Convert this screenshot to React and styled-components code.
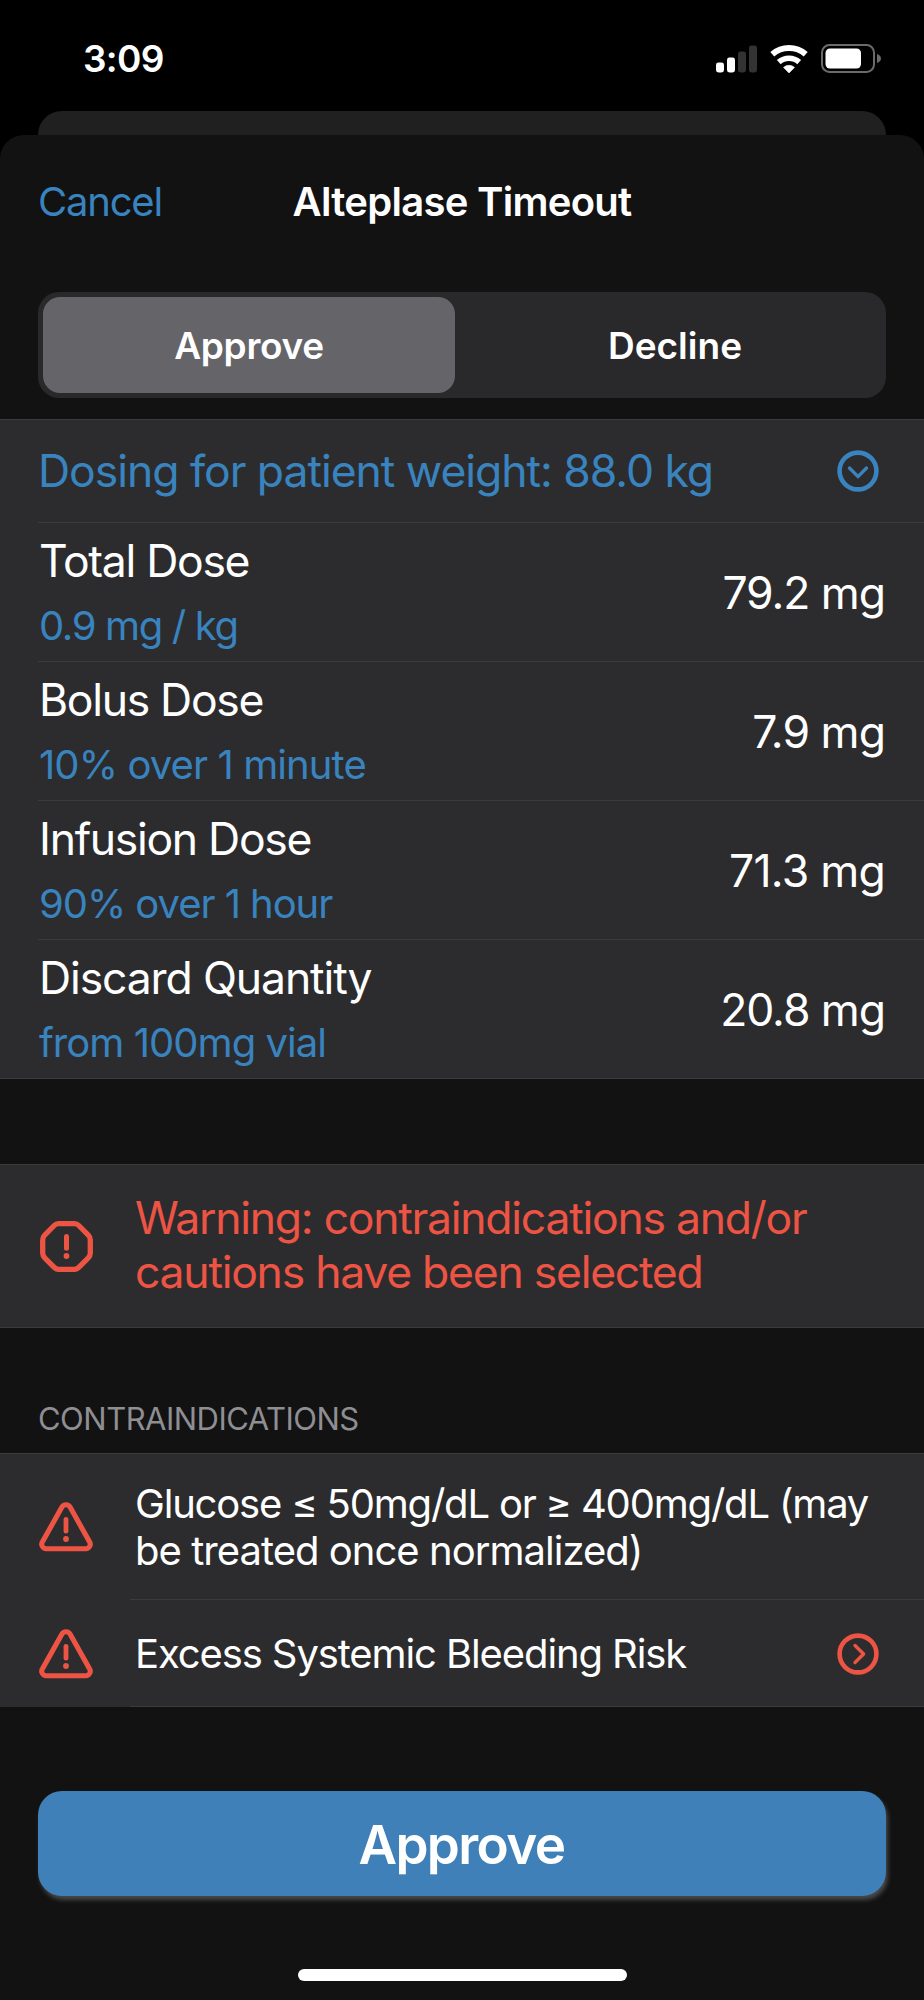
import React from 'react'
import styled, {createGlobalStyle} from 'styled-components'

const blue = '#3983bf'
const red = '#ee5444'
const line = '#3b3b3d'

const doses = [
  {title: 'Total Dose', note: '0.9 mg / kg', value: '79.2 mg', tracking: [-1.3, -1.36, -1.05]},
  {title: 'Bolus Dose', note: '10% over 1 minute', value: '7.9 mg', tracking: [-1.3, -0.9, -0.95]},
  {title: 'Infusion Dose', note: '90% over 1 hour', value: '71.3 mg', tracking: [-1.3, -1.05, -0.75]},
  {title: 'Discard Quantity', note: 'from 100mg vial', value: '20.8 mg', tracking: [-1.13, -0.95, -1.05]}
]

function SignalIcon() {
  return (
    <svg width="41" height="28" viewBox="0 0 41 28">
      <rect x="0" y="17.5" width="8" height="10" rx="2.4" fill="#fff" />
      <rect x="11" y="12.5" width="8" height="15" rx="2.4" fill="#fff" />
      <rect x="22" y="6.5" width="8" height="21" rx="2.4" fill="#333" />
      <rect x="33" y="0.5" width="8" height="27" rx="2.4" fill="#333" />
    </svg>
  )
}

function WifiIcon() {
  return (
    <svg width="38" height="30" viewBox="0 0 38 30" fill="none" stroke="#fff">
      <path d="M2.3 10.3A25.5 25.5 0 0 1 35.7 10.3" strokeWidth="6" />
      <path d="M8.8 18.1A15.3 15.3 0 0 1 29.2 18.1" strokeWidth="5.6" />
      <path d="M19 29L13.5 23.4A8.3 8.3 0 0 1 24.5 23.4Z" fill="#fff" strokeWidth="0.6" strokeLinejoin="round" />
    </svg>
  )
}

function BatteryIcon() {
  return (
    <svg width="60" height="29" viewBox="0 0 60 29">
      <rect x="1" y="1" width="52" height="27" rx="7.5" fill="none" stroke="#6b6b6b" strokeWidth="2" />
      <rect x="4.5" y="4.5" width="35.5" height="20" rx="4.5" fill="#fff" />
      <path d="M56 10C58.4 10.6 60 12.3 60 14.5S58.4 18.4 56 19Z" fill="#6b6b6b" />
    </svg>
  )
}

function ChevronCircle({color, right}) {
  return (
    <svg width="42" height="42" viewBox="0 0 42 42" fill="none" stroke={color}>
      <circle cx="21" cy="21" r="18.4" strokeWidth="4.6" />
      <path
        d="M12.5 18L21 26.6L29.5 18"
        strokeWidth="3.4"
        strokeLinecap="round"
        strokeLinejoin="round"
        transform={right ? 'rotate(-90 21 21)' : undefined}
      />
    </svg>
  )
}

function OctagonAlert() {
  return (
    <svg width="53" height="51" viewBox="0 0 53 51" fill="none" stroke={red}>
      <path
        d="M18.5 2.7H34.5Q37 2.7 38.8 4.5L48.3 14.2Q50.3 16.2 50.3 18.9V32.1Q50.3 34.8 48.3 36.8L38.8 46.4Q37 48.3 34.5 48.3H18.5Q16 48.3 14.2 46.4L4.7 36.8Q2.7 34.8 2.7 32.1V18.9Q2.7 16.2 4.7 14.2L14.2 4.5Q16 2.7 18.5 2.7Z"
        strokeWidth="5.3"
      />
      <path d="M26.5 15.6V27.2" strokeWidth="5" strokeLinecap="round" />
      <circle cx="26.5" cy="35" r="2.9" fill={red} stroke="none" />
    </svg>
  )
}

function TriangleAlert() {
  return (
    <svg width="54" height="50" viewBox="0 0 54 50" fill="none" stroke={red}>
      <path
        d="M22.8 5.3A4.8 4.8 0 0 1 31.2 5.3L50.4 39.6A4.5 4.5 0 0 1 46.5 46.7H7.5A4.5 4.5 0 0 1 3.6 39.6Z"
        strokeWidth="5.1"
      />
      <path d="M27 17.3V29.2" strokeWidth="4.8" strokeLinecap="round" />
      <circle cx="27" cy="37" r="2.9" fill={red} stroke="none" />
    </svg>
  )
}

export default function App() {
  return (
    <>
      <GlobalStyle />
      <Screen>
        <StatusBar>
          <Time>3:09</Time>
          <StatusIcons>
            <SignalIcon />
            <WifiIcon />
            <BatteryIcon />
          </StatusIcons>
        </StatusBar>
        <BackCard />
        <Sheet>
          <NavBar>
            <Cancel>Cancel</Cancel>
            <NavTitle>Alteplase Timeout</NavTitle>
          </NavBar>
          <Segmented>
            <Segment $active $tracking={-0.31}>
              Approve
            </Segment>
            <Segment $tracking={0}>Decline</Segment>
          </Segmented>

          <Panel>
            <PanelHeader>
              Dosing for patient weight: 88.0 kg
              <ChevronCircle color={blue} />
            </PanelHeader>
            {doses.map(dose => (
              <DoseRow key={dose.title}>
                <div>
                  <DoseTitle $tracking={dose.tracking[0]}>{dose.title}</DoseTitle>
                  <DoseNote $tracking={dose.tracking[1]}>{dose.note}</DoseNote>
                </div>
                <DoseValue $tracking={dose.tracking[2]}>{dose.value}</DoseValue>
              </DoseRow>
            ))}
          </Panel>

          <Warning>
            <OctagonAlert />
            <WarningText>
              Warning: contraindications and/or
              <br />
              cautions have been selected
            </WarningText>
          </Warning>

          <SectionTitle>CONTRAINDICATIONS</SectionTitle>
          <AlertList>
            <AlertRow>
              <TriangleAlert />
              <AlertText $height={145}>
                <div>
                  <AlertLine $tracking={-1.19}>Glucose ≤ 50mg/dL or ≥ 400mg/dL (may</AlertLine>
                  <AlertLine $tracking={-0.97}>be treated once normalized)</AlertLine>
                </div>
              </AlertText>
            </AlertRow>
            <AlertRow>
              <TriangleAlert />
              <AlertText $height={106}>
                <AlertLine $tracking={-1.11}>Excess Systemic Bleeding Risk</AlertLine>
                <ChevronCircle color={red} right />
              </AlertText>
            </AlertRow>
          </AlertList>

          <ApproveButton>Approve</ApproveButton>
          <HomeIndicator />
        </Sheet>
      </Screen>
    </>
  )
}

const GlobalStyle = createGlobalStyle`
  * {
    box-sizing: border-box;
  }

  body {
    margin: 0;
    background: #000;
    font-family: 'Inter', 'Liberation Sans', sans-serif;
  }

  svg {
    display: block;
    flex: none;
  }
`

const Screen = styled.div`
  display: flex;
  flex-direction: column;
  width: 924px;
  height: 2000px;
  overflow: hidden;
  background: #000;
  color: #fff;
  white-space: nowrap;
`

// Status bar

const StatusBar = styled.div`
  display: flex;
  align-items: center;
  justify-content: space-between;
  height: 111px;
  padding: 6px 43px 0 83px;
`

const Time = styled.div`
  font-size: 37px;
  font-weight: 600;
  letter-spacing: -0.7px;
`

const StatusIcons = styled.div`
  display: flex;
  align-items: center;
  gap: 13px;
`

// Sheet

const BackCard = styled.div`
  height: 24px;
  margin: 0 38px;
  border-radius: 24px 24px 0 0;
  background: #202020;
`

const Sheet = styled.div`
  flex: 1;
  display: flex;
  flex-direction: column;
  border-radius: 24px 24px 0 0;
  background: #121212;
`

const NavBar = styled.div`
  display: grid;
  grid-template-columns: 1fr auto 1fr;
  align-items: center;
  height: 133px;
  padding: 0 38px;
  font-size: 40px;
`

const Cancel = styled.div`
  color: ${blue};
  letter-spacing: -1.2px;
`

const NavTitle = styled.div`
  font-weight: 600;
  letter-spacing: -0.72px;
`

const Segmented = styled.div`
  display: grid;
  grid-template-columns: 1fr 1fr;
  gap: 14px;
  height: 106px;
  margin: 24px 38px 21px;
  padding: 5px;
  border-radius: 21px;
  background: #29292b;
`

const Segment = styled.div`
  display: flex;
  align-items: center;
  justify-content: center;
  border-radius: 17px;
  background: ${props => (props.$active ? '#656468' : 'transparent')};
  font-size: 37px;
  font-weight: 600;
  letter-spacing: ${props => props.$tracking}px;
`

// Dosing

const Panel = styled.div`
  border: solid ${line};
  border-width: 1px 0;
  background: #2c2c2e;
`

const PanelHeader = styled.div`
  display: flex;
  align-items: center;
  justify-content: space-between;
  height: 103px;
  margin-left: 38px;
  padding-right: 45px;
  border-bottom: 1px solid ${line};
  color: ${blue};
  font-size: 44.5px;
  letter-spacing: -1.04px;
`

const DoseRow = styled.div`
  display: flex;
  align-items: center;
  justify-content: space-between;
  height: 139px;
  margin-left: 38px;
  padding-right: 38px;
  border-bottom: 1px solid ${line};

  &:last-child {
    height: 138px;
    border-bottom: 0;
  }
`

const DoseTitle = styled.div`
  padding-left: 1px;
  font-size: 44.5px;
  line-height: 54px;
  letter-spacing: ${props => props.$tracking}px;
`

const DoseNote = styled.div`
  margin-top: 14px;
  padding-left: 1px;
  color: ${blue};
  font-size: 40px;
  line-height: 48px;
  letter-spacing: ${props => props.$tracking}px;
`

const DoseValue = styled.div`
  padding: 2px 1px 0 0;
  font-size: 44.5px;
  letter-spacing: ${props => props.$tracking}px;
`

// Warning

const Warning = styled.div`
  display: flex;
  align-items: center;
  gap: 42px;
  height: 164px;
  margin-top: 85px;
  padding-left: 40px;
  border: solid ${line};
  border-width: 1px 0;
  background: #2c2c2e;
`

const WarningText = styled.div`
  color: ${red};
  font-size: 44.5px;
  line-height: 53.6px;
  letter-spacing: -1.26px;
`

// Contraindications

const SectionTitle = styled.div`
  padding: 73px 38px 16px;
  color: #8e8e93;
  font-size: 31px;
  line-height: 36px;
  letter-spacing: -0.52px;
`

const AlertList = styled.div`
  border-top: 1px solid ${line};
  background: #2c2c2e;
`

const AlertRow = styled.div`
  display: flex;
  align-items: center;
  padding-left: 39px;
`

const AlertText = styled.div`
  flex: 1;
  display: flex;
  align-items: center;
  justify-content: space-between;
  height: ${props => props.$height + 1}px;
  margin-left: 37px;
  padding: 1px 45px 0 5px;
  border-bottom: 1px solid ${line};
`

const AlertLine = styled.div`
  font-size: 40px;
  line-height: 47.4px;
  letter-spacing: ${props => props.$tracking}px;
`

// Footer

const ApproveButton = styled.button`
  height: 105px;
  margin: 84px 38px 0;
  padding: 2px 1px 0 0;
  border: 0;
  border-radius: 24px;
  background: #3f80b8;
  box-shadow: 2px 4px 4px #484848;
  color: #fff;
  font-family: inherit;
  font-size: 53px;
  font-weight: 600;
  letter-spacing: -1.6px;
`

const HomeIndicator = styled.div`
  width: 329px;
  height: 12px;
  margin: 73px auto 0;
  border-radius: 6px;
  background: #fff;
`
